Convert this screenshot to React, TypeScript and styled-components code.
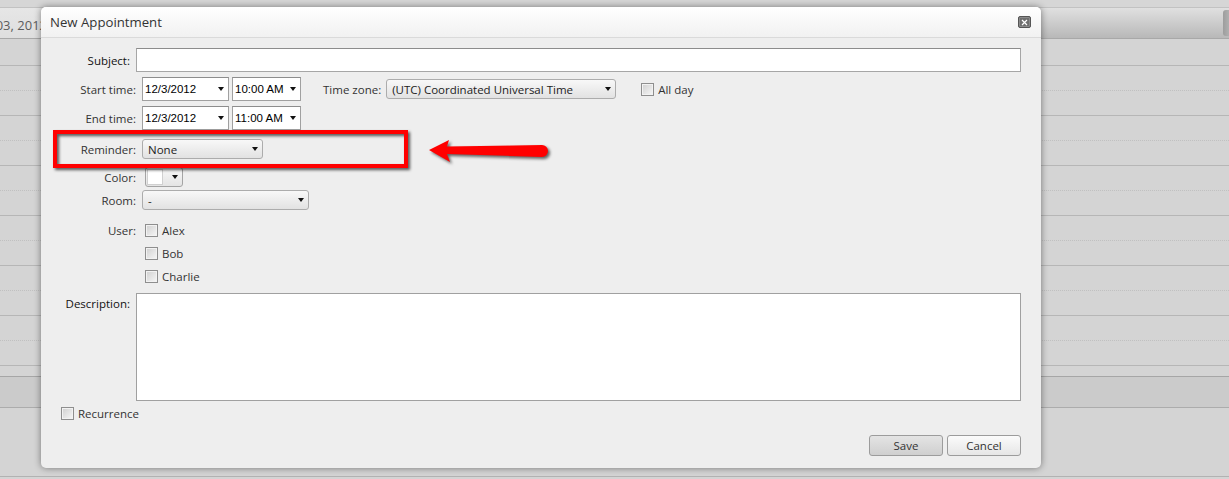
import React from "react";
import styled, { createGlobalStyle } from "styled-components";

const Global = createGlobalStyle`
  html, body { margin: 0; padding: 0; }
  body { font-family: "Open Sans", "Noto Sans", sans-serif; }
  * { box-sizing: border-box; }
`;

const Page = styled.div`
  position: relative;
  width: 1229px;
  height: 479px;
  overflow: hidden;
  background: #d4d4d4;
`;

const TopStrip = styled.div`
  height: 8px;
  background: #d6d6d6;
  border-bottom: 1px solid #c2c2c2;
`;

const HeaderBar = styled.div`
  display: flex;
  height: 31px;
  border-bottom: 1px solid #a8a8a8;
  background: linear-gradient(#e0e0e0, #b8b8b8);
`;

const DateCell = styled.div`
  width: 47px;
  display: flex;
  justify-content: flex-end;
  align-items: center;
  padding-top: 3px;
  overflow: hidden;
  white-space: nowrap;
  background: linear-gradient(#e6e6e6, #dedede);
  color: #5c5c5c;
  font-size: 13px;
`;

const HeaderFill = styled.div`
  flex: 1;
`;

const ScrollThumb = styled.div`
  width: 6px;
  margin: 2px 0 2px;
  border-radius: 3px 0 0 3px;
  background: linear-gradient(90deg, #9d9d9d, #b0b0b0);
`;

const AllDayRow = styled.div`
  height: 27px;
  border-bottom: 1px solid #b6b6b6;
`;

const HalfSlot = styled.div<{ $solid?: boolean }>`
  height: 25px;
  border-bottom: 1px ${(p) => (p.$solid ? "solid #b6b6b6" : "dotted #c0c0c0")};
`;

const DayEnd = styled.div`
  height: 11px;
  border-bottom: 1px solid #a6a6a6;
`;

const Band = styled.div`
  height: 31px;
  background: #cbcbcb;
  border-bottom: 1px solid #acacac;
`;

const Lower = styled.div`
  height: 69px;
  border-bottom: 1px solid #b2b2b2;
`;

const Dialog = styled.div`
  position: absolute;
  left: 41px;
  top: 7px;
  width: 1000px;
  height: 461px;
  background: #eeeeee;
  border-radius: 5px;
  box-shadow: 0 0 7px rgba(0, 0, 0, 0.45);
  display: flex;
  flex-direction: column;
  color: #333;
  font-size: 11.5px;
`;

const TitleBar = styled.div`
  height: 31px;
  border-radius: 5px 5px 0 0;
  border-bottom: 1px solid #dadada;
  background: linear-gradient(#ffffff, #f1f1f1);
  display: flex;
  align-items: center;
  justify-content: space-between;
  padding: 0 10px 0 9px;
`;

const Title = styled.span`
  font-size: 13.2px;
  color: #333;
`;

const CloseButton = styled.div`
  width: 13px;
  height: 12px;
  border-radius: 2px;
  background: #6f6f6f;
  border: 1px solid #555;
  box-shadow: inset 0 0 0 1px #8a8a8a;
  display: flex;
  align-items: center;
  justify-content: center;
`;

const Body = styled.div`
  position: relative;
  flex: 1;
  padding: 10px 20px 12px 20px;
  display: flex;
  flex-direction: column;
`;

const Row = styled.div<{ $mt?: number; $h: number }>`
  display: flex;
  align-items: center;
  margin-top: ${(p) => p.$mt ?? 0}px;
  height: ${(p) => p.$h}px;
`;

const Label = styled.div<{ $w: number; $strong?: boolean }>`
  width: ${(p) => p.$w}px;
  flex: none;
  text-align: right;
  margin-right: 6px;
  white-space: nowrap;
  color: ${(p) => (p.$strong ? "#111" : "#333")};
`;

const TextInput = styled.div`
  flex: 1;
  height: 24px;
  background: #fff;
  border: 1px solid #a6a6a6;
  border-top-color: #8c8c8c;
`;

const Field = styled.div<{ $w: number }>`
  width: ${(p) => p.$w}px;
  height: 24px;
  background: #fff;
  border: 1px solid #a0a0a0;
  border-top-color: #8d8d8d;
  display: flex;
  align-items: center;
  justify-content: space-between;
  padding: 0 4px 0 2px;
  margin-right: 3px;
  font-family: "Liberation Sans", Arial, sans-serif;
  font-size: 11.5px;
  color: #000;
`;

const Arrow = styled.span`
  width: 0;
  height: 0;
  border-left: 3.5px solid transparent;
  border-right: 3.5px solid transparent;
  border-top: 4px solid #111;
`;

const Select = styled.div<{ $w: number }>`
  width: ${(p) => p.$w}px;
  height: 20px;
  border: 1px solid #acacac;
  border-radius: 3px;
  background: linear-gradient(#f8f8f8, #e2e2e2);
  display: flex;
  align-items: center;
  justify-content: space-between;
  padding: 0 4px 0 5px;
  color: #222;
`;

const SubLabel = styled.span`
  margin: 0 5px 0 19px;
  white-space: nowrap;
`;

const Check = styled.span`
  width: 13px;
  height: 13px;
  flex: none;
  border: 1px solid #8e8e8e;
  background: linear-gradient(135deg, #cfcfcf, #f7f7f7);
  box-shadow: inset 0 0 0 1px #f2f2f2;
`;

const CheckLabel = styled.span`
  margin-left: 4px;
  white-space: nowrap;
  color: #333;
`;

const CheckWrap = styled.div<{ $ml?: number }>`
  display: flex;
  align-items: center;
  margin-left: ${(p) => p.$ml ?? 0}px;
`;

const ColorPicker = styled.div`
  width: 38px;
  height: 20px;
  margin-left: 3px;
  border: 1px solid #a4a4a4;
  border-radius: 3px;
  background: linear-gradient(#f8f8f8, #e4e4e4);
  display: flex;
  align-items: center;
  padding: 0 4px 0 1px;
  justify-content: space-between;
`;

const Swatch = styled.span`
  width: 16px;
  height: 16px;
  background: #fff;
  border: 1px solid #d0d0d0;
`;

const UserGroup = styled.div`
  display: flex;
  margin-top: 9px;
`;

const UserList = styled.div`
  display: flex;
  flex-direction: column;
  margin-left: 3px;
`;

const UserRow = styled.div<{ $end?: boolean }>`
  height: 23px;
  display: flex;
  align-items: center;
  justify-content: ${(p) => (p.$end ? "flex-end" : "flex-start")};
`;

const DescRow = styled.div`
  display: flex;
  margin-top: 5px;
`;

const DescLabel = styled(Label)`
  padding-top: 3px;
`;

const TextArea = styled.div`
  flex: 1;
  height: 108px;
  background: #fff;
  border: 1px solid #a0a0a0;
`;

const ButtonRow = styled.div`
  display: flex;
  justify-content: flex-end;
  gap: 4px;
  margin-top: 15px;
`;

const Button = styled.div<{ $primary?: boolean }>`
  width: 74px;
  height: 21px;
  border: 1px solid #9c9c9c;
  border-radius: 3px;
  display: flex;
  align-items: center;
  justify-content: center;
  color: #333;
  background: ${(p) =>
    p.$primary
      ? "linear-gradient(#e4e4e4, #cfcfcf)"
      : "linear-gradient(#fbfbfb, #e6e6e6)"};
`;

const Highlight = styled.div`
  position: absolute;
  left: 12px;
  top: 92px;
  width: 355px;
  height: 38px;
  border: 4px solid #ff0000;
  filter: drop-shadow(2px 2px 1.5px rgba(0, 0, 0, 0.65));
`;

const ArrowSvg = styled.svg`
  position: absolute;
  left: 384px;
  top: 97px;
  overflow: visible;
`;

export default function App() {
  const hours = [0, 1, 2, 3, 4, 5];
  return (
    <>
      <Global />
      <Page>
        <TopStrip />
        <HeaderBar>
          <DateCell>Monday, December 03, 2012</DateCell>
          <HeaderFill />
          <ScrollThumb />
        </HeaderBar>
        <AllDayRow />
        {hours.map((h) => (
          <React.Fragment key={h}>
            <HalfSlot />
            <HalfSlot $solid />
          </React.Fragment>
        ))}
        <DayEnd />
        <Band />
        <Lower />

        <Dialog>
          <TitleBar>
            <Title>New Appointment</Title>
            <CloseButton>
              <svg width="7" height="7" viewBox="0 0 7 7">
                <path d="M1 1 L6 6 M6 1 L1 6" stroke="#fff" strokeWidth="1.2" />
              </svg>
            </CloseButton>
          </TitleBar>
          <Body>
            <Row $h={24}>
              <Label $w={69} $strong>Subject:</Label>
              <TextInput />
            </Row>
            <Row $h={24} $mt={5}>
              <Label $w={75}>Start time:</Label>
              <Field $w={87}>
                12/3/2012
                <Arrow />
              </Field>
              <Field $w={69}>
                10:00 AM
                <Arrow />
              </Field>
              <SubLabel>Time zone:</SubLabel>
              <Select $w={230}>
                (UTC) Coordinated Universal Time
                <Arrow />
              </Select>
              <CheckWrap $ml={25}>
                <Check />
                <CheckLabel>All day</CheckLabel>
              </CheckWrap>
            </Row>
            <Row $h={24} $mt={5}>
              <Label $w={75}>End time:</Label>
              <Field $w={87}>
                12/3/2012
                <Arrow />
              </Field>
              <Field $w={69}>
                11:00 AM
                <Arrow />
              </Field>
            </Row>
            <Row $h={20} $mt={9}>
              <Label $w={75}>Reminder:</Label>
              <Select $w={121}>
                None
                <Arrow />
              </Select>
            </Row>
            <Row $h={20} $mt={8}>
              <Label $w={75}>Color:</Label>
              <ColorPicker>
                <Swatch />
                <Arrow />
              </ColorPicker>
            </Row>
            <Row $h={20} $mt={3}>
              <Label $w={75}>Room:</Label>
              <Select $w={167}>
                -
                <Arrow />
              </Select>
            </Row>
            <UserGroup>
              <Label $w={75}>
                <UserRow $end>User:</UserRow>
              </Label>
              <UserList>
                {["Alex", "Bob", "Charlie"].map((n) => (
                  <UserRow key={n}>
                    <Check />
                    <CheckLabel>{n}</CheckLabel>
                  </UserRow>
                ))}
              </UserList>
            </UserGroup>
            <DescRow>
              <DescLabel $w={69} $strong>Description:</DescLabel>
              <TextArea />
            </DescRow>
            <Row $h={13} $mt={6}>
              <Check />
              <CheckLabel>Recurrence</CheckLabel>
            </Row>
            <ButtonRow>
              <Button $primary>Save</Button>
              <Button>Cancel</Button>
            </ButtonRow>

            <Highlight />
            <ArrowSvg width="130" height="34" viewBox="0 0 130 34">
              <g style={{ filter: "drop-shadow(2px 2px 1.5px rgba(0,0,0,0.6))" }}>
                <path
                  d="M4 15 L24 5 L22 11.5 L117 10 A6 6 0 0 1 117 22 L22 19 L25 27 Z"
                  fill="#ff0000"
                />
              </g>
            </ArrowSvg>
          </Body>
        </Dialog>
      </Page>
    </>
  );
}
